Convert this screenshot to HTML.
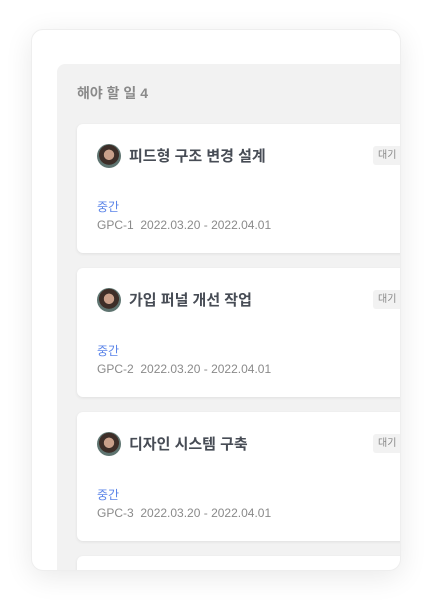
<!DOCTYPE html>
<html><head><meta charset="utf-8"><style>
html,body{margin:0;width:432px;height:604px;overflow:hidden}
body{background:#fff;font-family:"Liberation Sans","Noto Sans CJK KR",sans-serif;position:relative}
.outer{position:absolute;left:31px;top:29px;width:370px;height:542px;background:#fff;border-radius:12px;box-shadow:0 6px 28px rgba(0,0,0,0.09);overflow:hidden;border:1px solid #eee;box-sizing:border-box}
.panel{position:absolute;left:25px;top:34px;width:345px;height:508px;background:#f2f2f2;border-radius:8px 0 0 0;overflow:hidden}
.h{position:absolute;left:20px;top:19px;font-size:14px;font-weight:bold;color:#8a8a8a}
.card{position:absolute;left:20px;width:360px;height:129px;background:#fff;border-radius:6px;box-shadow:0 1px 3px rgba(0,0,0,0.08)}
.av{position:absolute;left:20px;top:20px;width:24px;height:24px;border-radius:50%;background:radial-gradient(circle at 50% 45%,#c9a08a 0 28%,#3d2e28 30% 55%,#5e7470 57%)}
.t{position:absolute;left:52px;top:21px;font-size:15px;font-weight:bold;color:#474c55}
.b{position:absolute;left:296px;top:22px;width:40px;height:19px;background:#f2f2f2;border-radius:3px;font-size:10px;color:#888;line-height:19px;padding-left:5px;box-sizing:border-box}
.p{position:absolute;left:20px;top:74px;font-size:12px;color:#5b84e8}
.m{position:absolute;left:20px;top:94px;font-size:12px;color:#8a8a8a;white-space:pre}
</style></head><body>
<div class="outer"><div class="panel">
<div class="h">해야 할 일 4</div>
<div class="card" style="top:60px"><div class="av"></div><div class="t">피드형 구조 변경 설계</div><div class="b">대기</div><div class="p">중간</div><div class="m">GPC-1  2022.03.20 - 2022.04.01</div></div>
<div class="card" style="top:204px"><div class="av"></div><div class="t">가입 퍼널 개선 작업</div><div class="b">대기</div><div class="p">중간</div><div class="m">GPC-2  2022.03.20 - 2022.04.01</div></div>
<div class="card" style="top:348px"><div class="av"></div><div class="t">디자인 시스템 구축</div><div class="b">대기</div><div class="p">중간</div><div class="m">GPC-3  2022.03.20 - 2022.04.01</div></div>
<div class="card" style="top:492px"></div>
</div></div>
</body></html>
